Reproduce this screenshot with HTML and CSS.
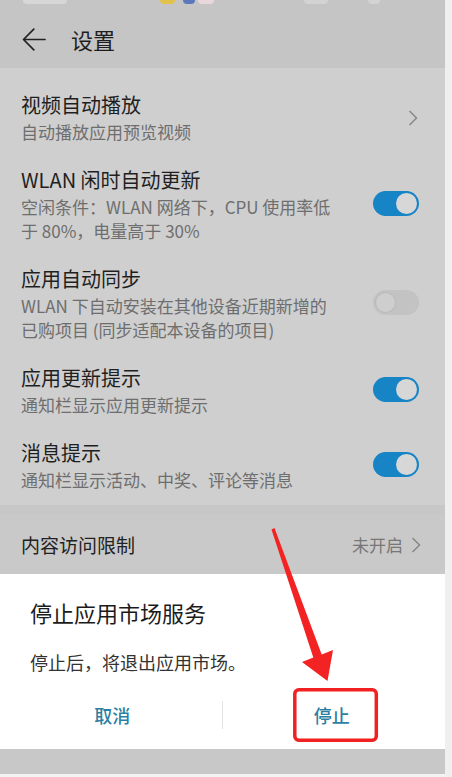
FILE: index.html
```html
<!DOCTYPE html>
<html>
  <head>
    <meta charset="utf-8" />
    <title>设置</title>
    <link rel="stylesheet" href="styles.css">
  </head>

  <body>
    <div class="page">
      <div class="screen">
        <!-- status bar, mostly cut off at the top -->
        <div class="status">
          <span class="dot dot-white wide"></span>
          <span class="dot dot-yellow"></span>
          <span class="dot dot-blue"></span>
          <span class="dot dot-pink"></span>
          <span class="dot dot-white right"></span>
          <span class="dot dot-white small"></span>
        </div>

        <header class="topbar">
          <svg class="back" width="24" height="23" viewBox="0 0 24 23">
            <path d="M23 11.5H1.8M11.8 1.2L1.5 11.5L11.8 21.8" fill="none" stroke="#222" stroke-width="1.7" stroke-linecap="round" stroke-linejoin="round" />
          </svg>
          <span class="topbar-title">设置</span>
        </header>

        <section class="list">
          <div class="item">
            <div class="item-text">
              <div class="item-title">视频自动播放</div>
              <div class="item-sub">自动播放应用预览视频</div>
            </div>
            <svg class="chevron" width="10" height="16" viewBox="0 0 10 16">
              <path d="M1.5 1L8.5 8L1.5 15" fill="none" stroke="#888" stroke-width="1.5" />
            </svg>
          </div>

          <div class="item">
            <div class="item-text">
              <div class="item-title">WLAN 闲时自动更新</div>
              <div class="item-sub">空闲条件：WLAN 网络下，CPU 使用率低<br>于 80%，电量高于 30%</div>
            </div>
            <div class="switch on"><span class="thumb"></span></div>
          </div>

          <div class="item">
            <div class="item-text">
              <div class="item-title">应用自动同步</div>
              <div class="item-sub">WLAN 下自动安装在其他设备近期新增的<br>已购项目 (同步适配本设备的项目)</div>
            </div>
            <div class="switch"><span class="thumb"></span></div>
          </div>

          <div class="item">
            <div class="item-text">
              <div class="item-title">应用更新提示</div>
              <div class="item-sub">通知栏显示应用更新提示</div>
            </div>
            <div class="switch on"><span class="thumb"></span></div>
          </div>

          <div class="item">
            <div class="item-text">
              <div class="item-title">消息提示</div>
              <div class="item-sub">通知栏显示活动、中奖、评论等消息</div>
            </div>
            <div class="switch on"><span class="thumb"></span></div>
          </div>
        </section>

        <div class="row-link">
          <span class="row-label">内容访问限制</span>
          <span class="row-value">
            未开启
            <svg width="10" height="16" viewBox="0 0 10 16">
              <path d="M1.5 1L8.5 8L1.5 15" fill="none" stroke="#888" stroke-width="1.5" />
            </svg>
          </span>
        </div>

        <!-- bottom sheet dialog -->
        <div class="dialog">
          <div class="dialog-title">停止应用市场服务</div>
          <div class="dialog-body">停止后，将退出应用市场。</div>
          <div class="dialog-actions">
            <div class="action">取消</div>
            <div class="action-divider"></div>
            <div class="action">停止</div>
          </div>
        </div>

        <div class="bottom-band"></div>
        <div class="bottom-edge"></div>

        <!-- red annotation drawn over the screenshot -->
        <svg class="annot" width="445" height="777" viewBox="0 0 445 777">
          <polygon points="271.5,529.5 274.5,528 321.7,654.4 333,650 327.5,681 302,662 313.3,657.6" fill="#f42323" />
          <rect x="294.8" y="689.8" width="81.5" height="50.5" rx="4" fill="none" stroke="#f12121" stroke-width="3.5" />
        </svg>
      </div>
      <div class="edge"></div>
    </div>
  </body>
</html>
```

FILE: styles.css
```css
body {
  margin: 0;
  font-family: "Noto Sans CJK SC", "Noto Sans", sans-serif;
  background: #f1f1f1;
}

.page {
  display: flex;
  width: 452px;
  height: 777px;
  overflow: hidden;
}

.screen {
  position: relative;
  width: 445px;
  height: 777px;
  background: #c7c7c7;
  display: flex;
  flex-direction: column;
}

.edge {
  flex: 1;
  background: #efefef;
}

/* status bar */
.status {
  height: 5px;
  display: flex;
  align-items: flex-start;
  background: #c5c5c5;
  overflow: hidden;
}

.dot {
  height: 4px;
  border-radius: 0 0 4px 4px;
}

.dot-white {
  background: #e2e2e2;
}

.dot-white.wide {
  width: 44px;
  margin-left: 23px;
  opacity: 0.6;
}

.dot-yellow {
  width: 15px;
  margin-left: 93px;
  background: #e3c24c;
}

.dot-blue {
  width: 12px;
  margin-left: 8px;
  background: #5a78bb;
}

.dot-pink {
  width: 16px;
  margin-left: 3px;
  background: #e8d8dc;
}

.dot-white.right {
  width: 24px;
  margin-left: 90px;
  opacity: 0.5;
}

.dot-white.small {
  width: 12px;
  margin-left: 40px;
  opacity: 0.5;
}

/* top bar */
.topbar {
  height: 63px;
  box-sizing: border-box;
  padding: 5px 0 0 22px;
  display: flex;
  align-items: center;
  background: #c5c5c5;
}

.back {
  margin-right: 25px;
}

.topbar-title {
  font-size: 22px;
  color: #1e1e1e;
}

/* settings list */
.list {
  background: #cfcfcf;
  padding: 12px 0 2px 0;
}

.item {
  display: flex;
  align-items: center;
  justify-content: space-between;
  padding: 12px 26px 11px 21px;
}

.item-title {
  font-size: 20px;
  line-height: 26px;
  color: #1f1f1f;
}

.item-sub {
  margin-top: 2px;
  font-size: 17px;
  line-height: 24px;
  color: #6e6e6e;
}

.chevron {
  margin-right: 1px;
}

.switch {
  width: 46px;
  height: 25px;
  box-sizing: border-box;
  padding: 2px;
  border-radius: 13px;
  background: #c3c3c3;
  display: flex;
  align-items: center;
  margin-bottom: 4px;
}

.switch .thumb {
  width: 21px;
  height: 21px;
  box-sizing: border-box;
  border-radius: 50%;
  background: #cecece;
  border: 1px solid #b8b8b8;
}

.switch.on {
  background: #1784c6;
  justify-content: flex-end;
}

.switch.on .thumb {
  background: #d7d7d7;
  border: none;
}

/* content restriction row */
.row-link {
  margin-top: 10px;
  height: 59px;
  box-sizing: border-box;
  padding: 0 24px 0 21px;
  display: flex;
  align-items: center;
  justify-content: space-between;
  background: #c9c9c9;
}

.row-label {
  font-size: 19px;
  color: #222;
}

.row-value {
  display: flex;
  align-items: center;
  gap: 8px;
  font-size: 17px;
  color: #777;
}

/* dialog */
.dialog {
  background: #fff;
  padding: 23px 0 9px 0;
}

.dialog-title {
  margin: 0 30px;
  font-size: 22px;
  line-height: 30px;
  color: #1b1b1b;
}

.dialog-body {
  margin: 22px 30px 0 30px;
  font-size: 18px;
  line-height: 26px;
  color: #333;
}

.dialog-actions {
  margin-top: 15px;
  height: 50px;
  padding: 0 4px 0 3px;
  display: flex;
  align-items: center;
}

.action {
  flex: 1;
  text-align: center;
  font-size: 18px;
  font-weight: 500;
  color: #2c7fa2;
}

.action-divider {
  width: 1px;
  height: 28px;
  background: #e2e2e2;
}

.bottom-band {
  height: 25px;
  background: #c8c8c8;
}

.bottom-edge {
  flex: 1;
  background: #f3f3f3;
}

.annot {
  position: absolute;
  top: 0;
  left: 0;
  pointer-events: none;
}
```
